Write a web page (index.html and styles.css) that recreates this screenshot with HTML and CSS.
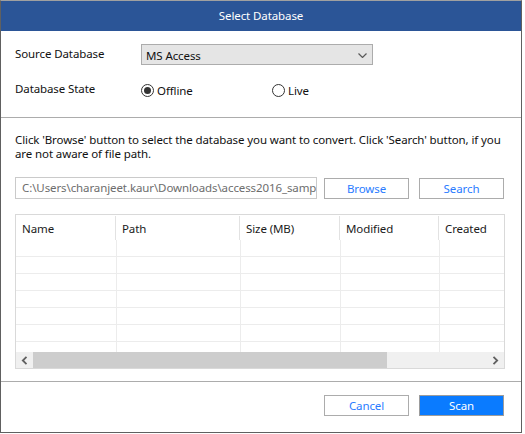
FILE: index.html
```html
<!DOCTYPE html>
<html lang="en">
<head>
    <meta charset="UTF-8">
    <meta name="viewport" content="width=device-width, initial-scale=1.0">
    <title>Select Database</title>
    <link rel="stylesheet" href="styles.css">
</head>
<body>
    <section class="dialog">
        <header class="dialog-title">Select Database</header>

        <div class="source-form">
            <div class="form-row">
                <label class="form-label">Source Database</label>
                <div class="select-box">
                    <span>MS Access</span>
                    <svg class="chevron" width="9" height="5" viewBox="0 0 9 5">
                        <path d="M0.5 0.5 L4.5 4.5 L8.5 0.5" fill="none" stroke="#5a5a5a" stroke-width="1.2"/>
                    </svg>
                </div>
            </div>
            <div class="form-row state-row">
                <label class="form-label">Database State</label>
                <div class="radio-group">
                    <span class="radio checked"></span><span class="radio-label">Offline</span>
                </div>
                <div class="radio-group">
                    <span class="radio"></span><span class="radio-label">Live</span>
                </div>
            </div>
        </div>

        <div class="file-section">
            <p class="hint">
                <span>Click 'Browse' button to select the database you want to convert. Click 'Search' button, if you</span>
                <span>are not aware of file path.</span>
            </p>

            <div class="path-row">
                <div class="path-input"><span>C:\Users\charanjeet.kaur\Downloads\access2016_samplec</span></div>
                <button class="btn">Browse</button>
                <button class="btn">Search</button>
            </div>

            <div class="file-list">
                <div class="list-header">
                    <div class="col">Name</div>
                    <div class="col">Path</div>
                    <div class="col">Size (MB)</div>
                    <div class="col">Modified</div>
                    <div class="col">Created</div>
                </div>
                <div class="list-body">
                    <div class="list-row"><i></i><i></i><i></i><i></i><i></i></div>
                    <div class="list-row"><i></i><i></i><i></i><i></i><i></i></div>
                    <div class="list-row"><i></i><i></i><i></i><i></i><i></i></div>
                    <div class="list-row"><i></i><i></i><i></i><i></i><i></i></div>
                    <div class="list-row"><i></i><i></i><i></i><i></i><i></i></div>
                    <div class="list-row"><i></i><i></i><i></i><i></i><i></i></div>
                    <div class="list-row partial"><i></i><i></i><i></i><i></i><i></i></div>
                </div>
                <div class="hscroll">
                    <span class="arrow">
                        <svg width="7" height="9" viewBox="0 0 7 9"><path d="M5.5 0.8 L1.8 4.5 L5.5 8.2" fill="none" stroke="#606060" stroke-width="1.8"/></svg>
                    </span>
                    <span class="thumb"></span>
                    <span class="track"></span>
                    <span class="arrow">
                        <svg width="7" height="9" viewBox="0 0 7 9"><path d="M1.5 0.8 L5.2 4.5 L1.5 8.2" fill="none" stroke="#606060" stroke-width="1.8"/></svg>
                    </span>
                </div>
            </div>
        </div>

        <footer class="dialog-footer">
            <button class="btn">Cancel</button>
            <button class="btn primary">Scan</button>
        </footer>
    </section>
</body>
</html>
```

FILE: styles.css
```css
* {
    box-sizing: border-box;
}

body {
    margin: 0;
    background: #ffffff;
    font-family: "Noto Sans", "Open Sans", sans-serif;
    font-size: 11.5px;
    letter-spacing: -0.1px;
    color: #111;
}

.dialog {
    width: 522px;
    height: 433px;
    border: 1px solid #606060;
    border-top-color: #a0a0a0;
    display: flex;
    flex-direction: column;
    background: white;
}

.dialog-title {
    height: 30px;
    background: #2b5597;
    color: white;
    display: flex;
    align-items: center;
    justify-content: center;
    padding-bottom: 1px;
}

.source-form {
    padding: 13px 0 0 14px;
    height: 87px;
    border-bottom: 1px solid #acacac;
}

.form-row {
    display: flex;
    align-items: center;
    height: 21px;
}

.form-label {
    width: 126px;
    margin-top: -2px;
}

.select-box {
    width: 232px;
    height: 21px;
    background: #e5e5e5;
    border: 1px solid #acacac;
    display: flex;
    align-items: center;
    justify-content: space-between;
    padding: 0 5px 0 4px;
}

.select-box span {
    margin-top: 1px;
}

.chevron {
    margin-top: 1px;
}

.state-row {
    margin-top: 18px;
    height: 13px;
}

.radio-group {
    display: flex;
    align-items: center;
    width: 131px;
    margin-top: 1px;
}

.radio {
    width: 13px;
    height: 13px;
    border: 1px solid #333;
    border-radius: 50%;
    position: relative;
    margin-right: 3px;
    flex-shrink: 0;
}

.radio.checked::after {
    content: "";
    position: absolute;
    left: 2px;
    top: 2px;
    width: 7px;
    height: 7px;
    border-radius: 50%;
    background: #333;
}

.radio-label {
    margin-top: 1px;
}

.file-section {
    padding: 15px 17px 0 14px;
}

.hint {
    margin: 0;
    line-height: 14px;
    white-space: nowrap;
}

.hint span {
    display: block;
}

.path-row {
    display: flex;
    margin-top: 16px;
    height: 22px;
}

.path-input {
    width: 302px;
    height: 22px;
    border: 1px solid #cacaca;
    color: #6d6d6d;
    padding: 2px 0 0 6px;
    white-space: nowrap;
    overflow: hidden;
    margin-right: 7px;
}

.btn {
    width: 85px;
    height: 21px;
    margin-top: 1px;
    border: 1px solid #acacac;
    background: white;
    color: #2a7cff;
    font-family: inherit;
    font-size: 11.5px;
    letter-spacing: -0.1px;
    padding: 0 0 1px;
    margin-left: 0;
    margin-right: 10px;
}

.btn:last-child {
    margin-right: 0;
}

.file-list {
    margin-top: 15px;
    width: 490px;
    height: 155px;
    border: 1px solid #d9d9d9;
    overflow: hidden;
}

.list-header {
    display: grid;
    grid-template-columns: 99px 124px 100px 99px 1fr;
    height: 25px;
    padding-top: 1px;
}

.list-header .col {
    padding: 5px 0 0 6px;
    color: #1b1b1b;
    white-space: nowrap;
}

.list-header .col + .col {
    border-left: 1px solid #e2e2e2;
}

.list-body {
    height: 112px;
    overflow: hidden;
}

.list-row {
    display: grid;
    grid-template-columns: 100px 124px 100px 99px 1fr;
    height: 17px;
    border-bottom: 1px solid #ececec;
}

.list-row.partial {
    height: 10px;
    border-bottom: none;
}

.list-row i + i {
    border-left: 1px solid #ececec;
}

.hscroll {
    display: flex;
    height: 16px;
    background: #f0f0f0;
}

.hscroll .arrow {
    width: 17px;
    display: flex;
    align-items: center;
    justify-content: center;
}

.hscroll .thumb {
    width: 354px;
    background: #cdcdcd;
}

.hscroll .track {
    flex: 1;
}

.dialog-footer {
    margin-top: 12px;
    border-top: 1px solid #acacac;
    padding: 13px 17px 0 0;
    display: flex;
    justify-content: flex-end;
}

.dialog-footer .btn {
    margin-top: 0;
    margin-right: 10px;
}

.dialog-footer .btn:last-child {
    margin-right: 0;
}

.btn.primary {
    background: #0a7bff;
    color: white;
    border-color: #9c9c9c;
}
```
